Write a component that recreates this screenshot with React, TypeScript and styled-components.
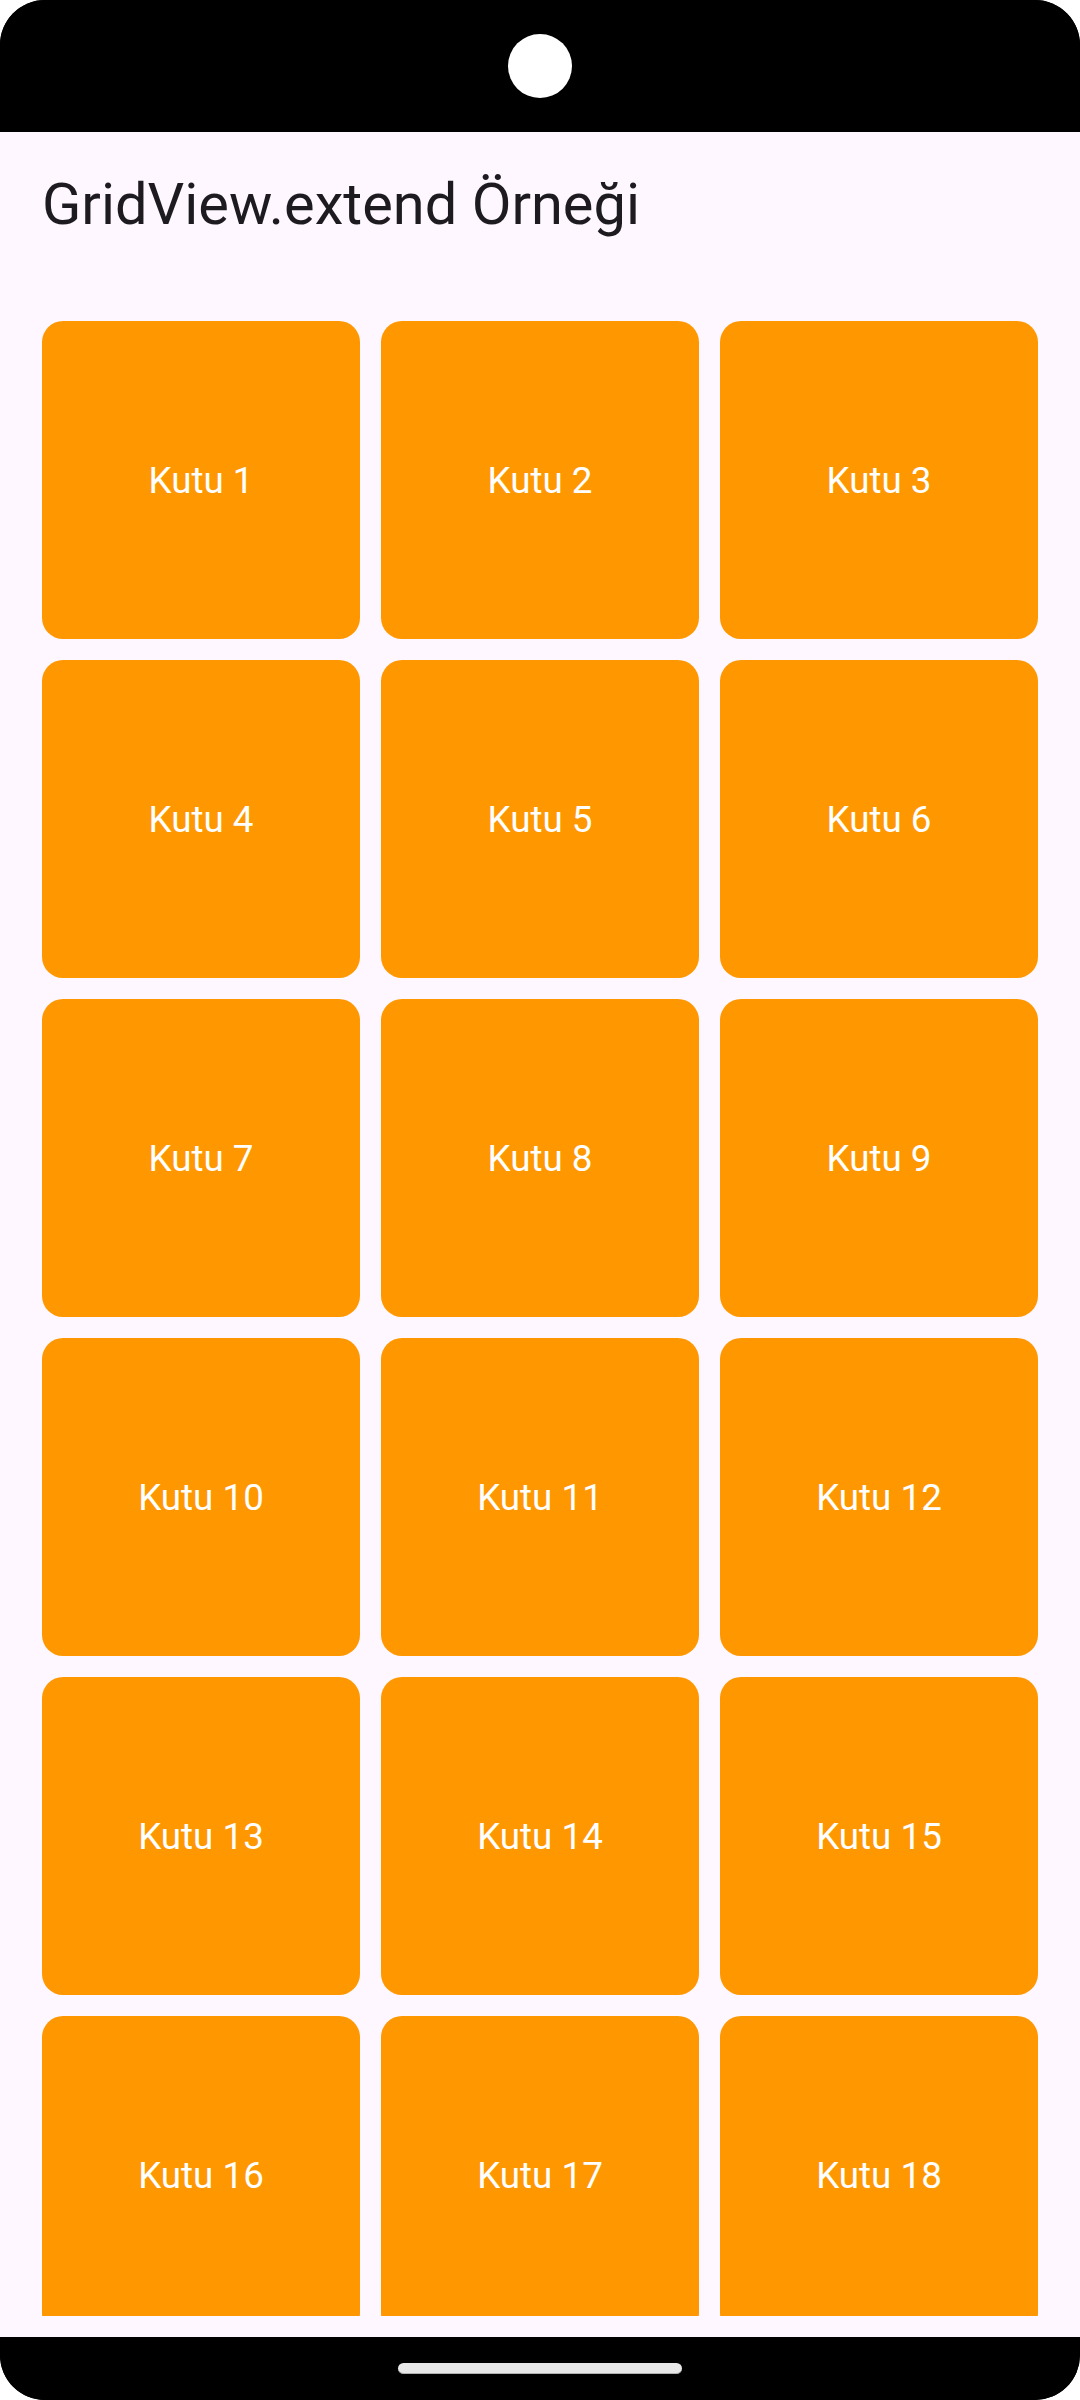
import React from "react";
import styled, { createGlobalStyle } from "styled-components";

const GlobalStyle = createGlobalStyle`
  html, body {
    margin: 0;
    padding: 0;
    background: #ffffff;
  }
  * { box-sizing: border-box; }
`;

const Phone = styled.div`
  width: 1080px;
  height: 2400px;
  border-radius: 45px;
  overflow: hidden;
  display: flex;
  flex-direction: column;
  background: #000000;
  font-family: Roboto, "Noto Sans", "Liberation Sans", sans-serif;
`;

const StatusBar = styled.div`
  height: 132px;
  flex: 0 0 132px;
  background: #000000;
  display: flex;
  justify-content: center;
  align-items: center;
`;

const Camera = styled.div`
  width: 64px;
  height: 64px;
  border-radius: 50%;
  background: #ffffff;
`;

const Screen = styled.div`
  flex: 1;
  min-height: 0;
  background: #fef7ff;
  display: flex;
  flex-direction: column;
  padding-bottom: 21px;
`;

const AppBar = styled.header`
  height: 147px;
  flex: 0 0 147px;
  display: flex;
  align-items: center;
  padding: 0 42px 4px;
`;

const Title = styled.h1`
  margin: 0;
  font-weight: 400;
  font-size: 57.75px;
  color: #1d1b20;
  line-height: normal;
`;

const GridViewport = styled.div`
  flex: 1;
  min-height: 0;
  overflow: hidden;
  padding: 42px 42px 0;
`;

const Grid = styled.div`
  display: grid;
  grid-template-columns: repeat(3, 1fr);
  gap: 21px;
`;

const Tile = styled.div`
  aspect-ratio: 1 / 1;
  background: #ff9800;
  border-radius: 21px;
  display: flex;
  align-items: center;
  justify-content: center;
  color: #ffffff;
  font-size: 36.75px;
  line-height: normal;
`;

const NavBar = styled.div`
  height: 63px;
  flex: 0 0 63px;
  background: #000000;
  display: flex;
  justify-content: center;
  padding-top: 26px;
`;

const HomePill = styled.div`
  width: 284px;
  height: 11px;
  border-radius: 6px;
  background: #e8e8e8;
  border-bottom: 1px solid #b0b0b0;
`;

const items = Array.from({ length: 18 }, (_, i) => `Kutu ${i + 1}`);

export default function App() {
  return (
    <>
      <GlobalStyle />
      <Phone>
        <StatusBar>
          <Camera />
        </StatusBar>
        <Screen>
          <AppBar>
            <Title>GridView.extend Örneği</Title>
          </AppBar>
          <GridViewport>
            <Grid>
              {items.map((label) => (
                <Tile key={label}>{label}</Tile>
              ))}
            </Grid>
          </GridViewport>
        </Screen>
        <NavBar>
          <HomePill />
        </NavBar>
      </Phone>
    </>
  );
}
